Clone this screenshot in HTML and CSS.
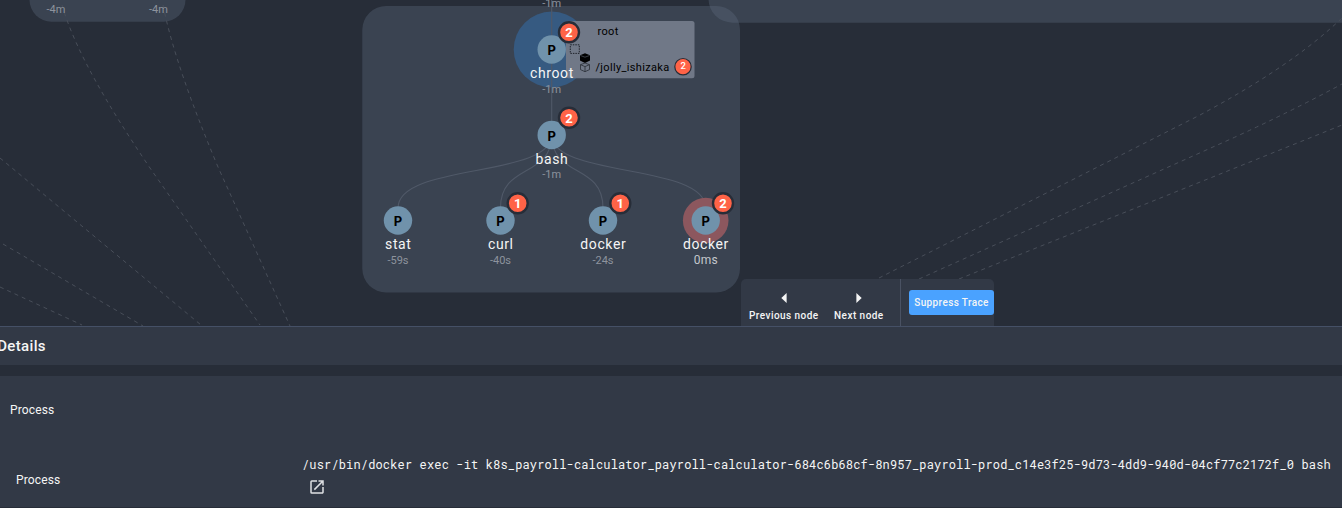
FILE: index.html
```html
<!DOCTYPE html>
<html lang="en">
<head>
<meta charset="utf-8">
<title>Process trace</title>
<link rel="stylesheet" href="styles.css">
</head>
<body>
<main class="page">
  <section class="trace">
    <svg class="graph" width="1342" height="326" viewBox="0 0 1342 326">
      <g class="group">
        <rect x="29.5" y="-60" width="156" height="81.7" rx="22"/>
        <rect x="362.3" y="6" width="377.7" height="286.5" rx="24"/>
        <rect x="708.5" y="-60" width="700" height="82.7" rx="24"/>
      </g>
      <g class="link-dashed">
        <path d="M62 5C75 50 108 106 150 168L260 325"/>
        <path d="M163 5C172 50 192 105 218 167L290 326"/>
        <path d="M0 158L201 325"/>
        <path d="M3 244L143 326"/>
        <path d="M0 287L82 325"/>
        <path d="M879 278L1200 115C1252 87 1302 56 1342 18"/>
        <path d="M919 279L1233 138Q1290 112 1342 84"/>
        <path d="M959 279L1342 125"/>
      </g>
      <circle class="halo" cx="551.7" cy="49.5" r="38"/>
      <g class="link">
        <path d="M551.7 0V135"/>
        <path d="M551.7 135C551.7 178 398 163 398 208"/>
        <path d="M551.7 135C551.7 178 500.5 163 500.5 208"/>
        <path d="M551.7 135C551.7 178 603 163 603 208"/>
        <path d="M551.7 135C551.7 178 705.7 163 705.7 208"/>
      </g>
      <circle class="halo-alert" cx="705.7" cy="220.5" r="22.8"/>
      <g class="node">
        <circle cx="551.7" cy="49.5" r="14.2"/>
        <circle cx="551.7" cy="135" r="14.2"/>
        <circle cx="398" cy="220.5" r="14.2"/>
        <circle cx="500.5" cy="220.5" r="14.2"/>
        <circle cx="603" cy="220.5" r="14.2"/>
        <circle cx="705.7" cy="220.5" r="14.2"/>
      </g>
      <g class="letter">
        <text x="551.7" y="55">P</text>
        <text x="551.7" y="140.6">P</text>
        <text x="398" y="226">P</text>
        <text x="500.5" y="226">P</text>
        <text x="603" y="226">P</text>
        <text x="705.7" y="226">P</text>
      </g>
      <rect class="popup" x="566" y="21" width="128.5" height="57.2" rx="2.5"/>
      <g class="name">
        <text x="552" y="78">chroot</text>
        <text x="552" y="164">bash</text>
        <text x="398.3" y="249">stat</text>
        <text x="500.8" y="249">curl</text>
        <text x="603.3" y="249">docker</text>
        <text x="706" y="249">docker</text>
      </g>
      <g class="time">
        <text x="56" y="13">-4m</text>
        <text x="158.5" y="13">-4m</text>
        <text x="551.7" y="7">-1m</text>
        <text x="551.7" y="93">-1m</text>
        <text x="551.7" y="178">-1m</text>
        <text x="398" y="264">-59s</text>
        <text x="500.5" y="264">-40s</text>
        <text x="603" y="264">-24s</text>
        <text class="now" x="705.9" y="264">0ms</text>
      </g>
      <rect class="marquee" x="570.3" y="44.8" width="9" height="8.6"/>
      <path class="cube" d="M585 53.2L590 55.2V60.6L585 63L580 60.6V55.2Z"/>
      <path class="cube-seam" d="M580.4 55.5L585 57.2L589.6 55.5"/>
      <path class="cube-line" d="M585 63L589.5 64.7V69.6L585 71.7L580.5 69.6V64.7ZM580.5 64.7L585 66.6L589.5 64.7M585 66.6V71.7"/>
      <g class="popup-text">
        <text x="597.5" y="35">root</text>
        <text x="595.5" y="71">/jolly_ishizaka</text>
      </g>
      <g class="badge">
        <circle cx="569" cy="32.3" r="10"/>
        <circle cx="569" cy="117.8" r="10"/>
        <circle cx="517.7" cy="203.3" r="10"/>
        <circle cx="620.3" cy="203.3" r="10"/>
        <circle cx="723" cy="203.3" r="10"/>
        <circle class="small" cx="683" cy="66.7" r="8.2"/>
      </g>
      <g class="count">
        <text x="569" y="37.2">2</text>
        <text x="569" y="122.7">2</text>
        <text x="517.7" y="208.2">1</text>
        <text x="620.3" y="208.2">1</text>
        <text x="723" y="208.2">2</text>
        <text class="small" x="683.2" y="69.2">2</text>
      </g>
    </svg>
    <div class="toolbar">
      <button class="step"><svg width="6" height="10" viewBox="0 0 6 10"><path d="M5.6 0V10L.3 5Z"/></svg>Previous node</button>
      <button class="step"><svg width="6" height="10" viewBox="0 0 6 10"><path d="M.4 0V10L5.7 5Z"/></svg>Next node</button>
      <div class="action"><button class="suppress">Suppress Trace</button></div>
    </div>
  </section>
  <header class="details-title">Details</header>
  <section class="details">
    <div class="row-heading">Process</div>
    <div class="row">
      <div class="row-label">Process</div>
      <div class="row-value">
        <div class="command">/usr/bin/docker exec -it k8s_payroll-calculator_payroll-calculator-684c6b68cf-8n957_payroll-prod_c14e3f25-9d73-4dd9-940d-04cf77c2172f_0 bash</div>
        <svg class="open" width="18" height="18" viewBox="0 0 24 24"><path d="M19 19H5V5h7V3H5a2 2 0 0 0-2 2v14a2 2 0 0 0 2 2h14c1.1 0 2-.9 2-2v-7h-2v7zM14 3v2h3.59l-9.83 9.83 1.41 1.41L19 6.41V10h2V3h-7z"/></svg>
      </div>
    </div>
  </section>
</main>
</body>
</html>
```
FILE: styles.css
```css
body {
  margin: 0;
  background: #272d38;
  color: #f5f5f5;
  font-family: Roboto, "Liberation Sans", sans-serif;
}
.page {
  display: flex;
  flex-direction: column;
  width: 1342px;
  height: 508px;
  overflow: hidden;
}
.trace {
  position: relative;
  height: 326px;
  border-bottom: 1px solid #455066;
}
.graph { display: block; }
.group rect { fill: #5d6b7f; fill-opacity: .36; }
.link-dashed { fill: none; stroke: #484e59; stroke-width: 1; stroke-dasharray: 4 4; }
.link { fill: none; stroke: #505968; stroke-width: 1.1; }
.halo { fill: #365a81; }
.halo-alert { fill: #8c575e; }
.node circle { fill: #7092ab; }
.letter { fill: #000; font-family: Inter, "Liberation Sans", sans-serif; font-size: 13px; font-weight: 700; text-anchor: middle; }
.popup { fill: #707887; }
.name { fill: #f5f5f5; font-size: 14px; letter-spacing: .6px; text-anchor: middle; }
.time { fill: #8d939d; font-size: 11px; text-anchor: middle; }
.time .now { fill: #c3c7cc; font-size: 12px; letter-spacing: .3px; }
.marquee { fill: none; stroke: #20242c; stroke-width: 1; stroke-dasharray: 1.5 1; }
.cube { fill: #000; }
.cube-seam { fill: none; stroke: #707887; stroke-width: .5; }
.cube-line { fill: none; stroke: #2a2e36; stroke-width: .8; }
.popup-text { fill: #000; font-size: 11px; letter-spacing: .33px; }
.badge circle { fill: #ff6347; stroke: #272d38; stroke-width: 2.4; }
.badge .small { stroke-width: 1.2; }
.count { fill: #fff; font-size: 13px; font-weight: 700; text-anchor: middle; }
.count .small { font-size: 9.5px; font-weight: 500; }
.toolbar {
  position: absolute;
  left: 741px;
  bottom: 0;
  box-sizing: border-box;
  display: flex;
  width: 253px;
  height: 47px;
  padding-left: 8px;
  background: #323946;
  border-radius: 5px 5px 0 0;
}
button {
  border: 0;
  padding: 0;
  background: none;
  color: #f5f5f5;
  font-family: inherit;
}
.step {
  display: flex;
  flex-direction: column;
  align-items: center;
  justify-content: flex-end;
  gap: 6px;
  box-sizing: border-box;
  height: 47px;
  margin-right: 15.5px;
  padding-bottom: 4px;
  font-size: 10px;
  font-weight: 500;
  line-height: 13px;
  letter-spacing: .45px;
  white-space: nowrap;
}
.step path { fill: #f5f5f5; }
.action {
  display: flex;
  align-items: center;
  margin-left: auto;
  padding-left: 8px;
  border-left: 1px solid #4a5263;
}
.suppress {
  width: 85px;
  height: 25px;
  border-radius: 3px;
  background: #4aa2ff;
  font-size: 10px;
  font-weight: 500;
  letter-spacing: .38px;
  white-space: nowrap;
}
.details-title {
  height: 38px;
  margin-bottom: 11px;
  background: #323946;
  font-size: 15px;
  font-weight: 500;
  line-height: 39px;
  letter-spacing: .35px;
  text-indent: -2.8px;
}
.details {
  height: 131px;
  background: #323946;
  border-bottom: 1px solid #272d38;
  font-size: 12px;
  letter-spacing: .15px;
}
.row-heading { height: 67px; padding-left: 10px; line-height: 69px; }
.row { display: flex; align-items: flex-start; height: 64px; padding-left: 16px; }
.row-label { width: 286px; padding-top: 30px; flex: none; }
.row-value { flex: none; padding-top: 12px; }
.command {
  font-family: "Roboto Mono", "DejaVu Sans Mono", monospace;
  font-size: 12px;
  line-height: 18px;
  letter-spacing: .148px;
  white-space: nowrap;
}
.open { display: block; margin: 5px 0 0 6px; }
.open path { fill: #dfe1e4; }
```
